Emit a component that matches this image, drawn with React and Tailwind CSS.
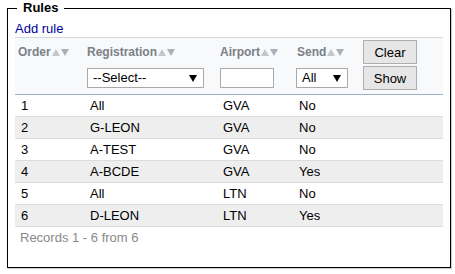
import React from 'react';

const rules = [
    { order: 1, registration: 'All', airport: 'GVA', send: 'No' },
    { order: 2, registration: 'G-LEON', airport: 'GVA', send: 'No' },
    { order: 3, registration: 'A-TEST', airport: 'GVA', send: 'No' },
    { order: 4, registration: 'A-BCDE', airport: 'GVA', send: 'Yes' },
    { order: 5, registration: 'All', airport: 'LTN', send: 'No' },
    { order: 6, registration: 'D-LEON', airport: 'LTN', send: 'Yes' },
];

const SortArrows = () => (
    <span className="inline-flex items-center ml-[1px] gap-[1px] align-middle">
        <svg width="8" height="7" viewBox="0 0 8 7">
            <path d="M4 0 L8 7 L0 7 Z" fill="#c3c7cc" />
        </svg>
        <svg width="8" height="7" viewBox="0 0 8 7">
            <path d="M0 0 L8 0 L4 7 Z" fill="#aab0b8" />
        </svg>
    </span>
);

const HeaderCell = ({ label }) => (
    <span className="inline-flex items-center text-[12px] font-bold text-[#7b8088]">
        {label}
        <SortArrows />
    </span>
);

const FakeSelect = ({ value, width, options }) => (
    <div className="relative" style={{ width }}>
        <select
            defaultValue={value}
            className="appearance-none w-full h-[20px] border border-[#a9a9a9] bg-white pl-[5px] text-[13px] leading-[18px] text-black outline-none"
        >
            {options.map((o) => (
                <option key={o}>{o}</option>
            ))}
        </select>
        <svg className="absolute right-[7px] top-[7px] pointer-events-none" width="8" height="7" viewBox="0 0 8 7">
            <path d="M0 0 L8 0 L4 7 Z" fill="#000" />
        </svg>
    </div>
);

const GrayButton = ({ children }) => (
    <button className="w-[54px] h-[24px] border border-[#adadad] bg-[#e6e6e6] text-[13px] text-black leading-none">
        {children}
    </button>
);

export default function App() {
    return (
        <div className="w-[455px] h-[274px] bg-white pl-[7px] font-['Liberation_Sans',Arial,sans-serif]">
            <fieldset className="w-[440px] h-[268px] border border-black px-[7px] shadow-[1px_1px_1px_#cfcfcf]">
                <legend className="ml-[2px] px-[6px] text-[13px] leading-[16px] font-bold text-black">Rules</legend>

                <div className="mt-[5px] text-[13px] leading-[16px]">
                    <a href="#" className="text-[#0000a0]">Add rule</a>
                </div>

                <table className="w-[428px] border-collapse text-[13px] text-black">
                    <thead className="bg-[#f8f9fa]">
                        <tr className="h-[28px] border-t border-[#d4d8dc]">
                            <th className="w-[72px] text-left font-normal pl-[3px]"><HeaderCell label="Order" /></th>
                            <th className="w-[131px] text-left font-normal"><HeaderCell label="Registration" /></th>
                            <th className="w-[77px] text-left font-normal pl-[2px]"><HeaderCell label="Airport" /></th>
                            <th className="w-[65px] text-left font-normal pl-[2px]"><HeaderCell label="Send" /></th>
                            <th className="text-left font-normal pl-[3px] pt-[1px]"><GrayButton>Clear</GrayButton></th>
                        </tr>
                        <tr className="h-[29px] border-b border-[#9fb1c6]">
                            <td></td>
                            <td className="pb-[3px]">
                                <FakeSelect value="--Select--" width={117} options={['--Select--', 'All', 'G-LEON', 'A-TEST', 'A-BCDE', 'D-LEON']} />
                            </td>
                            <td className="pl-[2px] pb-[3px]">
                                <input type="text" className="w-[54px] h-[20px] border border-[#a9a9a9] bg-white outline-none" />
                            </td>
                            <td className="pl-[1px] pb-[3px]">
                                <FakeSelect value="All" width={52} options={['All', 'Yes', 'No']} />
                            </td>
                            <td className="pl-[3px] pb-[3px]"><GrayButton>Show</GrayButton></td>
                        </tr>
                    </thead>
                    <tbody>
                        {rules.map((r, i) => (
                            <tr
                                key={r.order}
                                className={`h-[22px] border-b border-[#dcdcdc] ${i % 2 === 1 ? 'bg-[#eeeeee]' : 'bg-white'}`}
                            >
                                <td className="pl-[6px]">{r.order}</td>
                                <td className="pl-[3px]">{r.registration}</td>
                                <td className="pl-[5px]">{r.airport}</td>
                                <td className="pl-[4px]">{r.send}</td>
                                <td></td>
                            </tr>
                        ))}
                    </tbody>
                </table>

                <div className="pl-[5px] pt-[3px] text-[13px] leading-[16px] text-[#888888]">Records 1 - 6 from 6</div>
            </fieldset>
        </div>
    );
}
